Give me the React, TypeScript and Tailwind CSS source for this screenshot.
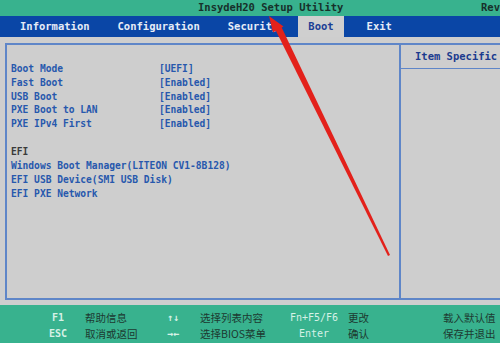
const mono = { fontFamily: '"DejaVu Sans Mono", "Liberation Mono", monospace' };
const cjk = { fontFamily: '"Noto Sans CJK SC", sans-serif' };

const settings = [
  ["Boot Mode", "[UEFI]"],
  ["Fast Boot", "[Enabled]"],
  ["USB Boot", "[Enabled]"],
  ["PXE Boot to LAN", "[Enabled]"],
  ["PXE IPv4 First", "[Enabled]"],
];

const efiItems = [
  "Windows Boot Manager(LITEON CV1-8B128)",
  "EFI USB Device(SMI USB Disk)",
  "EFI PXE Network",
];

const keys = [
  ["F1", "帮助信息", "↑↓", "选择列表内容", "Fn+F5/F6", "更改", "载入默认值"],
  ["ESC", "取消或返回", "→←", "选择BIOS菜单", "Enter", "确认", "保存并退出"],
];

function Arrow() {
  // annotation drawn over the screenshot
  return (
    <svg className="absolute inset-0 pointer-events-none" width="500" height="343" viewBox="0 0 500 343">
      <polygon points="274.5,28 280.5,25 390,255 388,256" fill="#e3211b" />
      <polygon points="269,16 283.5,26.5 273,32.5" fill="#e3211b" />
    </svg>
  );
}

export default function App() {
  return (
    <div
      className="relative w-[500px] h-[343px] overflow-hidden bg-[#cecece] flex flex-col font-bold"
      style={mono}
    >
      <div className="h-[16px] bg-[#38b28e] flex items-center text-[10.5px] text-[#17302a] whitespace-nowrap">
        <span className="ml-[198px]">InsydeH20 Setup Utility</span>
        <span className="ml-auto">Rev</span>
      </div>

      <div className="h-[21px] bg-[#0a46a6] flex items-stretch pl-[10px] gap-[8px] text-[10.5px] text-[#e6ecf6] whitespace-nowrap">
        <span className="px-[10px] flex items-center">Information</span>
        <span className="px-[10px] flex items-center">Configuration</span>
        <span className="px-[10px] flex items-center">Security</span>
        <span className="ml-[2px] px-[10px] flex items-center bg-[#cfcfcf] text-[#1c3f95]">Boot</span>
        <span className="ml-[5px] px-[10px] flex items-center">Exit</span>
      </div>

      <div className="h-[6px]" />

      <div className="ml-[5px] flex h-[257px] border-t-2 border-b-2 border-l-2 border-[#5f86c8]">
        <div className="w-[392px] pt-[17px] pl-[4px] text-[9.6px] leading-[13.78px] text-[#2758ad] whitespace-nowrap">
          {settings.map(([k, v]) => (
            <div key={k} className="flex">
              <span className="w-[148px]">{k}</span>
              <span>{v}</span>
            </div>
          ))}
          <div className="h-[14.5px]" />
          <div className="text-[#3a3a3a]">EFI</div>
          {efiItems.map((e) => (
            <div key={e}>{e}</div>
          ))}
        </div>
        <div className="flex-1 border-l-2 border-[#5f86c8] flex flex-col">
          <div className="h-[24px] border-b border-[#5f86c8] flex items-center pl-[14px] text-[10.5px] text-[#1b3b8e] whitespace-nowrap">
            Item Specific
          </div>
        </div>
      </div>

      <div className="h-[5px]" />

      <div className="flex-1 bg-[#38b28e] pt-[5px] text-[10px] leading-[16px] whitespace-nowrap">
        {keys.map((r) => (
          <div key={r[0]} className="flex items-center">
            <span className="w-[24px] ml-[46px] text-center text-[#d6f1e6]">{r[0]}</span>
            <span className="ml-[15px] w-[75px] text-[10.5px] font-normal text-[#1d3a31]" style={cjk}>{r[1]}</span>
            <span className="w-[26px] text-center text-[#d6f1e6]">{r[2]}</span>
            <span className="ml-[14px] w-[86px] text-[10.5px] font-normal text-[#1d3a31]" style={cjk}>{r[3]}</span>
            <span className="w-[56px] text-center text-[#d6f1e6] font-normal">{r[4]}</span>
            <span className="ml-[6px] w-[95px] text-[10.5px] font-normal text-[#1d3a31]" style={cjk}>{r[5]}</span>
            <span className="text-[10.5px] font-normal text-[#1d3a31]" style={cjk}>{r[6]}</span>
          </div>
        ))}
      </div>

      <Arrow />
    </div>
  );
}
